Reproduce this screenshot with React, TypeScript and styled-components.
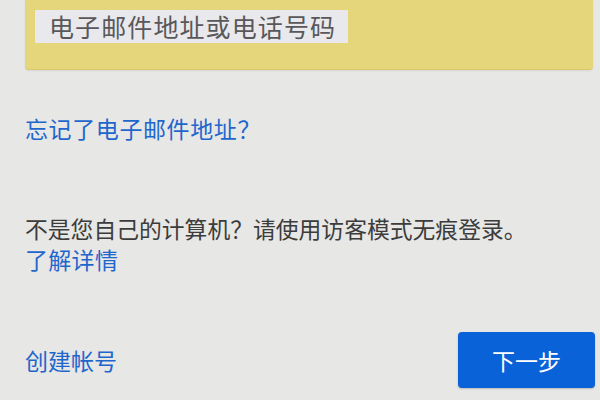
import React from "react";
import styled, { createGlobalStyle } from "styled-components";

const Global = createGlobalStyle`
  html, body { margin: 0; padding: 0; background: #e7e7e6; }
  body { font-family: "Noto Sans CJK SC", "Noto Sans", sans-serif; }
`;

const Page = styled.div`
  width: 600px;
  height: 400px;
  box-sizing: border-box;
  padding: 0 5px 0 25px;
  display: flex;
  flex-direction: column;
  background: #e7e7e6;
  overflow: hidden;
`;

const InputBox = styled.div`
  height: 70px;
  margin-right: 2px;
  box-sizing: border-box;
  padding: 10px 0 0 10px;
  background: #e6d67b;
  border-bottom: 1px solid #d9c86a;
  border-radius: 0 0 4px 4px;
  box-shadow: 0 1px 2px rgba(0, 0, 0, 0.08);
  display: flex;
  align-items: flex-start;
`;

const Placeholder = styled.span`
  display: inline-block;
  height: 33px;
  line-height: 33px;
  padding: 0 12px 0 14px;
  background: #e9e8ec;
  color: #58585a;
  font-size: 25px;
  letter-spacing: 1.1px;
`;

const Link = styled.a<{ $top?: number; $spacing?: number }>`
  display: block;
  margin-top: ${(p) => p.$top ?? 0}px;
  color: #1f66cc;
  font-size: 23px;
  line-height: 30px;
  letter-spacing: ${(p) => p.$spacing ?? 0}px;
  text-decoration: none;
  cursor: pointer;
`;

const Notice = styled.p<{ $top: number }>`
  margin: ${(p) => p.$top}px 0 0;
  color: #3c3c3c;
  font-size: 22.8px;
  line-height: 30px;
  white-space: nowrap;
`;

const Footer = styled.div`
  margin-top: auto;
  margin-bottom: 12px;
  display: flex;
  align-items: center;
  justify-content: space-between;
`;

const PrimaryButton = styled.button`
  width: 137px;
  height: 56px;
  border: none;
  border-radius: 4px;
  background: #0a62d9;
  color: #ffffff;
  font-family: "Noto Sans CJK SC", "Noto Sans", sans-serif;
  font-size: 23px;
  box-shadow: 0 1px 2px rgba(0, 0, 0, 0.2);
  cursor: pointer;
`;

export default function App() {
  return (
    <>
      <Global />
      <Page>
        <InputBox>
          <Placeholder>电子邮件地址或电话号码</Placeholder>
        </InputBox>
        <Link $top={43} $spacing={0.6}>忘记了电子邮件地址？</Link>
        <Notice $top={71}>不是您自己的计算机？请使用访客模式无痕登录。</Notice>
        <Link $spacing={0.3}>了解详情</Link>
        <Footer>
          <Link>创建帐号</Link>
          <PrimaryButton>下一步</PrimaryButton>
        </Footer>
      </Page>
    </>
  );
}
